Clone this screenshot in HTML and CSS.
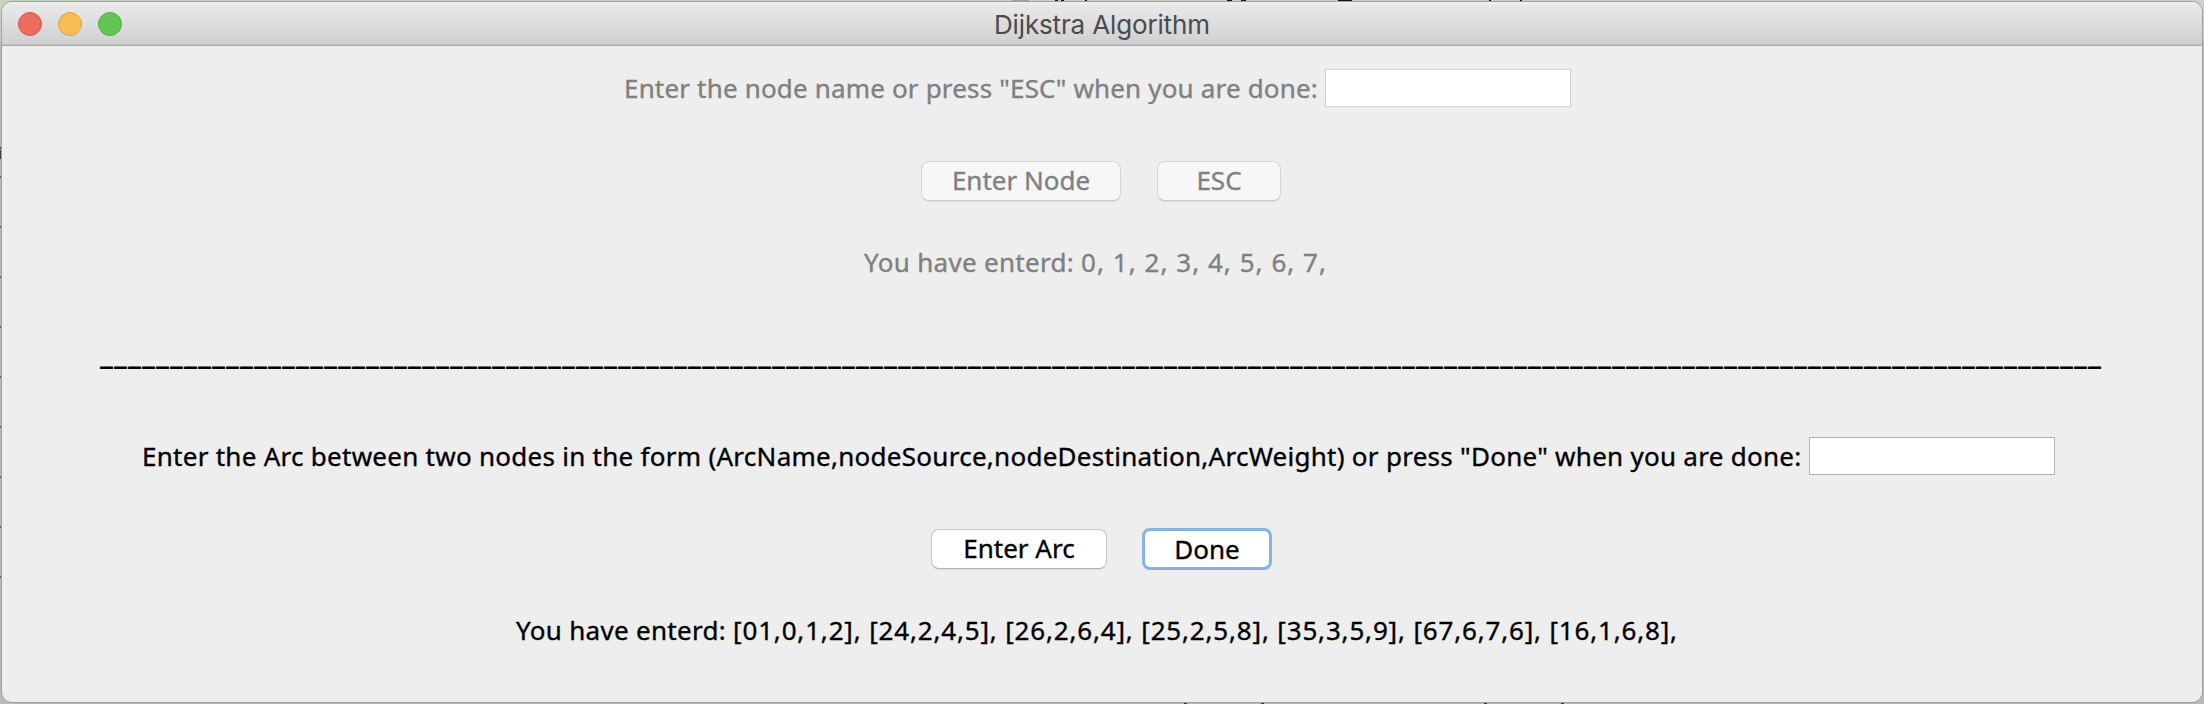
FILE: index.html
```html
<!DOCTYPE html>
<html lang="en">
<head>
<meta charset="utf-8">
<title>Dijkstra Algorithm</title>
<link rel="stylesheet" href="styles.css">
</head>
<body>
<svg class="backdrop" width="2204" height="704" viewBox="0 0 2204 704" aria-hidden="true">
<path fill="#c5d5c0" d="M0 0h2204v42H0z"/>
<path fill="#b9b9b9" d="M0 42h2204v662H0z"/>
<path fill="#a99fb0" d="M1012 0h17v2h-17z"/>
<path fill="#111" d="M1055 0h3v2h-3zM1061 0h3v2h-3zM1085 0h2v2h-2zM1227 0h5v2h-5zM1241 0h5v2h-5zM1338 0h14v2h-14zM1489 0h2v2h-2zM1520 0h2v2h-2z"/>
<path fill="#444" d="M0 147h2v2H0zM0 150h2v9H0z"/>
<path fill="#6a6a6a" d="M0 176h2v2H0zM0 226h2v2H0zM0 276h2v2H0zM0 326h2v2H0zM0 376h2v2H0zM0 426h2v2H0zM0 476h2v2H0zM0 526h2v2H0zM0 576h2v2H0z"/>
<path fill="#3a3a3a" d="M1184 702h3v2h-3zM1261 702h3v2h-3zM1484 702h3v2h-3zM1561 702h3v2h-3z"/>
</svg>
<main class="window">
  <header class="titlebar">
    <span class="light close"></span><span class="light minimize"></span><span class="light maximize"></span>
    <h1 class="title">Dijkstra Algorithm</h1>
  </header>
  <section class="row node-prompt disabled">
    <label class="text t-node" for="node">Enter the node name or press "ESC" when you are done:</label>
    <input class="field" id="node" disabled>
  </section>
  <section class="row node-buttons disabled">
    <button class="button b-node" disabled><span class="text">Enter Node</span></button>
    <button class="button b-esc" disabled><span class="text">ESC</span></button>
  </section>
  <section class="row node-list disabled"><span class="text t-nodes">You have enterd: <span class="node-values">0, 1, 2, 3, 4, 5, 6, 7,</span></span></section>
  <section class="row divider">_______________________________________________________________________________________________________________________________________________</section>
  <section class="row arc-prompt">
    <label class="text t-arc" for="arc">Enter the Arc between two nodes in the form (ArcName,nodeSource,nodeDestination,ArcWeight) or press "Done" when you are done:</label>
    <input class="field" id="arc">
  </section>
  <section class="row arc-buttons">
    <button class="button b-arc"><span class="text">Enter Arc</span></button>
    <button class="button b-done"><span class="text">Done</span></button>
  </section>
  <section class="row arc-list"><span class="text t-arcs">You have enterd: <span class="arc-values">[01,0,1,2], [24,2,4,5], [26,2,6,4], [25,2,5,8], [35,3,5,9], [67,6,7,6], [16,1,6,8],</span></span></section>
</main>
</body>
</html>
```

FILE: styles.css
```css
* { box-sizing: border-box; }
body { margin: 0; width: 2204px; height: 704px; padding: 1px; overflow: hidden; }
.backdrop { position: absolute; left: 0; top: 0; z-index: -1; }
.window {
  width: 2202px; height: 702px; overflow: hidden;
  border: 1px solid #9c9f9c; border-radius: 11px;
  background: #eee; color: #000;
  font: 26px/40px "Noto Sans", sans-serif;
}
.titlebar {
  height: 44px; display: flex; align-items: center; gap: 16px;
  padding-left: 16px;
  background: linear-gradient(#f3f3f3 0, #e9e9e9 3px, #d1d1d1 41px);
  border-bottom: 1px solid #a9a9a9;
  box-shadow: inset 0 -1px #c2c2c2;
}
.light { width: 24px; height: 24px; border-radius: 50%; border: 1px solid; }
.close { background: #ed6b5f; border-color: #d85549; }
.minimize { background: #f6be50; border-color: #dba344; }
.maximize { background: #62c655; border-color: #51ad45; }
.title {
  margin: 0 0 0 856px; padding-top: 2px; font: 400 26px/40px Inter, sans-serif;
  color: #4b4b4b; white-space: nowrap; letter-spacing: -0.15px;
}
.row { display: flex; align-items: center; white-space: nowrap; }
.disabled { color: #808080; }
.text { display: block; white-space: nowrap; -webkit-text-stroke: 0.35px currentColor; }
.field {
  width: 246px; height: 38px; margin: 0; padding: 0 6px;
  border: 1px solid #b2b2b2; border-radius: 0; background: #fff; font: inherit;
}
.disabled .field { border-color: #d0d0d0; }
.node-prompt { height: 38px; margin-top: 23px; padding-left: 622px; }
.t-node { width: 701px; letter-spacing: 0.17px; }
.node-buttons { height: 40px; margin-top: 54px; padding-left: 919px; gap: 36px; }
.button {
  height: 40px; padding: 0 0 2px; display: flex; justify-content: center; align-items: center;
  border: 1px solid #c8c8c8; border-bottom-color: #b4b4b4; border-radius: 8px;
  background: #fff; color: inherit; font: inherit; box-shadow: 0 1px 1px #ddd;
}
.disabled .button { background: #f7f7f7; border-color: #d8d8d8; border-bottom-color: #cacaca; }
.b-node { width: 200px; }
.b-esc { width: 124px; }
.node-list { height: 40px; margin-top: 41px; padding-left: 862px; }
.t-nodes, .t-arcs { letter-spacing: 0.3px; }
.node-values { letter-spacing: 1.04px; }
.arc-values { letter-spacing: 0.83px; }
.divider {
  height: 40px; margin-top: 52px; padding-left: 98px;
  font: 700 26px/40px "DejaVu Sans", sans-serif; letter-spacing: 1px;
}
.arc-prompt { height: 38px; margin-top: 63px; padding-left: 140px; }
.t-arc { width: 1667px; letter-spacing: 0.27px; }
.arc-buttons { height: 42px; margin-top: 53px; padding-left: 929px; gap: 35px; }
.b-arc { width: 176px; }
.b-done { width: 130px; height: 42px; padding-bottom: 1px; border: 3px solid #82b3eb; box-shadow: none; }
.arc-list { height: 40px; margin-top: 40px; padding-left: 514px; }
```
